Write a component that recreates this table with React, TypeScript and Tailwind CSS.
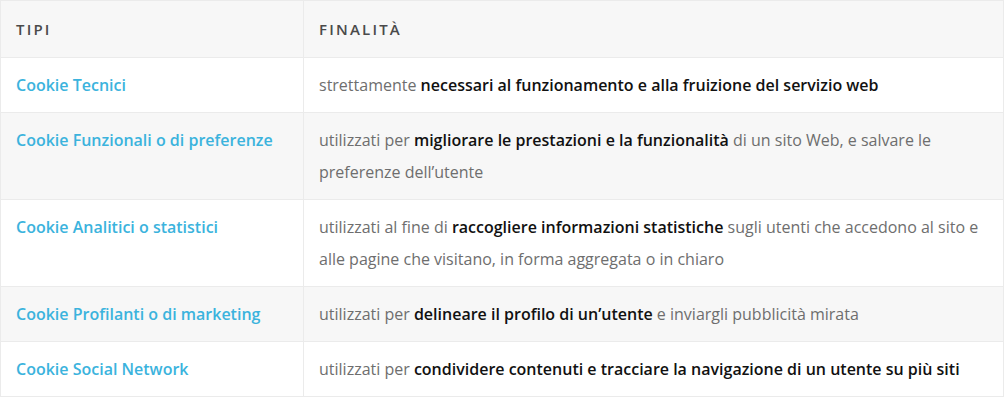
export default function App() {
  // Cookie types and what they are used for
  const rows = [
    {
      tipo: 'Cookie Tecnici',
      fin: (
        <>
          strettamente <b>necessari al funzionamento e alla fruizione del servizio web</b>
        </>
      ),
    },
    {
      tipo: 'Cookie Funzionali o di preferenze',
      fin: (
        <>
          utilizzati per <b>migliorare le prestazioni e la funzionalità</b> di un sito Web, e salvare le preferenze dell’utente
        </>
      ),
    },
    {
      tipo: 'Cookie Analitici o statistici',
      fin: (
        <>
          utilizzati al fine di <b>raccogliere informazioni statistiche</b> sugli utenti che accedono al sito e alle pagine che visitano, in forma aggregata o in chiaro
        </>
      ),
    },
    {
      tipo: 'Cookie Profilanti o di marketing',
      fin: (
        <>
          utilizzati per <b>delineare il profilo di un’utente</b> e inviargli pubblicità mirata
        </>
      ),
    },
    {
      tipo: 'Cookie Social Network',
      fin: (
        <>
          utilizzati per <b>condividere contenuti e tracciare la navigazione di un utente su più siti</b>
        </>
      ),
    },
  ]

  return (
    <div className="w-[1004px] h-[400px] bg-white font-['Open_Sans',sans-serif]">
      <table className="w-[1004px] border-collapse table-fixed">
        <thead>
          <tr className="bg-[#f7f7f7]">
            <th className="w-[303px] border border-[#ebebeb] px-[15px] py-4 text-left text-[15px] leading-6 font-semibold tracking-[2.2px] text-[#4a4a4a]">
              TIPI
            </th>
            <th className="border border-[#ebebeb] px-[15px] py-4 text-left text-[15px] leading-6 font-semibold tracking-[2.2px] text-[#4a4a4a]">
              FINALITÀ
            </th>
          </tr>
        </thead>
        <tbody>
          {rows.map((r, i) => (
            <tr key={r.tipo} className={i % 2 === 1 ? 'bg-[#f7f7f7]' : 'bg-white'}>
              <td className="align-top border border-[#ebebeb] px-[15px] py-[11px] text-[16px] leading-8 font-semibold text-[#3bb3dd]">
                {r.tipo}
              </td>
              <td className="align-top border border-[#ebebeb] px-[15px] py-[11px] text-[16px] leading-8 text-[#6e6e6e] [&_b]:font-semibold [&_b]:text-[#111]">
                {r.fin}
              </td>
            </tr>
          ))}
        </tbody>
      </table>
    </div>
  )
}
